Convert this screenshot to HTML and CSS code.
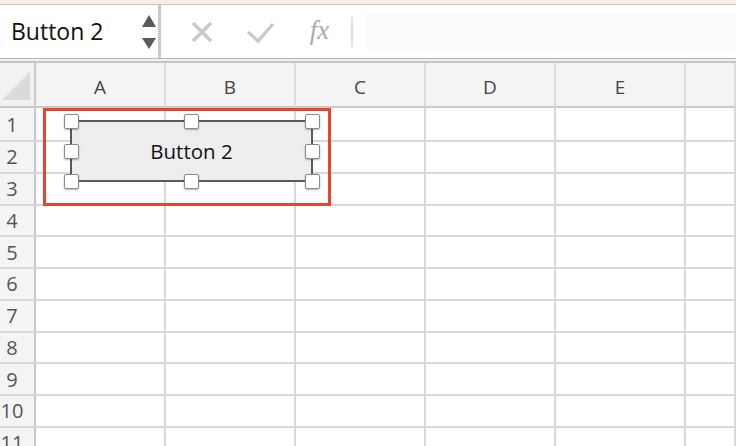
FILE: index.html
```html
<!DOCTYPE html>
<html>
<head>
<meta charset="utf-8">
<link rel="stylesheet" href="styles.css">
</head>
<body>
<div class="app">
  <div class="titlestrip"></div>
  <div class="formulabar">
    <div class="namebox">
      <span class="nametext">Button 2</span>
      <svg class="spinner" width="16" height="40" viewBox="0 0 16 40">
        <polygon points="1,14 8,2 15,14" fill="#5b5b5b"/>
        <polygon points="1,25 15,25 8,36" fill="#5b5b5b"/>
      </svg>
    </div>
    <div class="vdots"></div>
    <div class="tools">
      <div class="tool">
        <svg width="24" height="24" viewBox="0 0 24 24"><path d="M3 3 L21 21 M21 3 L3 21" stroke="#c9c9c9" stroke-width="3.4" fill="none"/></svg>
      </div>
      <div class="tool">
        <svg width="30" height="24" viewBox="0 0 30 24"><path d="M2 12 L12 21 L27 4" stroke="#c9c9c9" stroke-width="3.4" fill="none"/></svg>
      </div>
      <div class="tool"><span class="fx">fx</span></div>
      <div class="tooldiv"></div>
    </div>
    <div class="fxinput"></div>
  </div>
  <div class="sep"></div>
  <div class="sheet">
    <div class="corner">
      <svg width="34" height="43" viewBox="0 0 34 43"><polygon points="30,9 30,37 2,37" fill="#dadada"/></svg>
    </div>
    <div class="colhead">A</div>
    <div class="colhead">B</div>
    <div class="colhead">C</div>
    <div class="colhead">D</div>
    <div class="colhead">E</div>
    <div class="colhead"></div>

    <div class="rowhead first">1</div>
    <div class="cell first"></div><div class="cell first"></div><div class="cell first"></div><div class="cell first"></div><div class="cell first"></div><div class="cell first"></div>

    <div class="rowhead">2</div>
    <div class="cell"></div><div class="cell"></div><div class="cell"></div><div class="cell"></div><div class="cell"></div><div class="cell"></div>
    <div class="rowhead">3</div>
    <div class="cell"></div><div class="cell"></div><div class="cell"></div><div class="cell"></div><div class="cell"></div><div class="cell"></div>
    <div class="rowhead">4</div>
    <div class="cell"></div><div class="cell"></div><div class="cell"></div><div class="cell"></div><div class="cell"></div><div class="cell"></div>
    <div class="rowhead">5</div>
    <div class="cell"></div><div class="cell"></div><div class="cell"></div><div class="cell"></div><div class="cell"></div><div class="cell"></div>
    <div class="rowhead">6</div>
    <div class="cell"></div><div class="cell"></div><div class="cell"></div><div class="cell"></div><div class="cell"></div><div class="cell"></div>
    <div class="rowhead">7</div>
    <div class="cell"></div><div class="cell"></div><div class="cell"></div><div class="cell"></div><div class="cell"></div><div class="cell"></div>
    <div class="rowhead">8</div>
    <div class="cell"></div><div class="cell"></div><div class="cell"></div><div class="cell"></div><div class="cell"></div><div class="cell"></div>
    <div class="rowhead">9</div>
    <div class="cell"></div><div class="cell"></div><div class="cell"></div><div class="cell"></div><div class="cell"></div><div class="cell"></div>
    <div class="rowhead">10</div>
    <div class="cell"></div><div class="cell"></div><div class="cell"></div><div class="cell"></div><div class="cell"></div><div class="cell"></div>
    <div class="rowhead">11</div>
    <div class="cell"></div><div class="cell"></div><div class="cell"></div><div class="cell"></div><div class="cell"></div><div class="cell"></div>
  </div>

  <div class="selection"></div>
  <div class="button">
    <span class="btnlabel">Button 2</span>
    <div class="handle h-tl"></div>
    <div class="handle h-tm"></div>
    <div class="handle h-tr"></div>
    <div class="handle h-ml"></div>
    <div class="handle h-mr"></div>
    <div class="handle h-bl"></div>
    <div class="handle h-bm"></div>
    <div class="handle h-br"></div>
  </div>
</div>
</body>
</html>
```
FILE: styles.css
```css
* { box-sizing: border-box; }
html, body {
  margin: 0;
  padding: 0;
  width: 736px;
  height: 446px;
  overflow: hidden;
  background: #ffffff;
  font-family: "Open Sans", "Noto Sans", sans-serif;
}
.app {
  position: relative;
  width: 736px;
  height: 446px;
  overflow: hidden;
}
.titlestrip {
  height: 5px;
  background: #f7f0e1;
  border-bottom: 1px solid #cfc8b4;
}
.formulabar {
  height: 54px;
  display: flex;
  align-items: stretch;
  background: #ffffff;
  border-bottom: 1px solid #b9b9b9;
}
.namebox {
  width: 158px;
  display: flex;
  align-items: center;
  padding-left: 11px;
  padding-right: 1px;
}
.nametext {
  font-size: 23px;
  color: #111111;
  line-height: 1;
}
.spinner {
  margin-left: auto;
  margin-top: 2px;
}
.vdots {
  width: 3px;
  background: repeating-linear-gradient(to bottom, #bdbdbd 0 1px, #d6d6d6 1px 2px);
}
.tools {
  display: flex;
  align-items: center;
  padding-left: 11px;
}
.tool {
  width: 59px;
  display: flex;
  align-items: center;
  justify-content: center;
}
.fx {
  font-family: "Liberation Serif", "DejaVu Serif", serif;
  font-style: italic;
  font-size: 27px;
  color: #ababab;
  line-height: 1;
  margin-top: -3px;
}
.tooldiv {
  width: 2px;
  height: 30px;
  margin-left: 2px;
  background: #dedede;
}
.fxinput {
  flex: 1;
  margin: 8px 0 8px 13px;
  background: #fbfbfb;
}
.sep {
  height: 4px;
  background: #f1f1f1;
  border-bottom: 2px solid #c6c6c6;
}
.sheet {
  display: grid;
  grid-template-columns: 36px repeat(5, 130px) 1fr;
  grid-template-rows: 45px 34px repeat(10, 31.75px);
}
.corner {
  background: #f2f2f2;
  border-right: 2px solid #c9c9c9;
  border-bottom: 2px solid #c9c9c9;
}
.corner svg { display: block; }
.colhead {
  background: #f4f4f4;
  border-right: 2px solid #dcdcdc;
  border-bottom: 2px solid #c9c9c9;
  display: flex;
  align-items: center;
  justify-content: center;
  padding-top: 4px;
  font-size: 19px;
  color: #444444;
}
.rowhead {
  background: #f4f4f4;
  border-right: 2px solid #c6c6c6;
  border-bottom: 2px solid #d9d9d9;
  display: flex;
  align-items: center;
  justify-content: center;
  padding-right: 10px;
  font-size: 20px;
  color: #555555;
}
.cell {
  border-right: 2px solid #d8d8d8;
  border-bottom: 2px solid #d8d8d8;
}
.selection {
  position: absolute;
  left: 43px;
  top: 108px;
  width: 288px;
  height: 98px;
  border: 3px solid #e8442e;
}
.button {
  position: absolute;
  left: 70px;
  top: 120px;
  width: 243px;
  height: 62px;
  border: 2px solid #5a5a5a;
  background: #eeeeee;
  display: flex;
  align-items: center;
  justify-content: center;
}
.btnlabel {
  font-size: 20.5px;
  color: #111111;
  line-height: 1;
  margin-top: 1px;
}
.handle {
  position: absolute;
  width: 15px;
  height: 15px;
  background: #ffffff;
  border: 1px solid #8a8a8a;
  border-radius: 2px;
  box-shadow: 0 1px 2px rgba(0,0,0,0.3);
}
.h-tl { left: -8.5px; top: -8.5px; }
.h-tm { left: calc(50% - 7.5px); top: -8.5px; }
.h-tr { right: -8.5px; top: -8.5px; }
.h-ml { left: -8.5px; top: calc(50% - 7.5px); }
.h-mr { right: -8.5px; top: calc(50% - 7.5px); }
.h-bl { left: -8.5px; bottom: -8.5px; }
.h-bm { left: calc(50% - 7.5px); bottom: -8.5px; }
.h-br { right: -8.5px; bottom: -8.5px; }
```
